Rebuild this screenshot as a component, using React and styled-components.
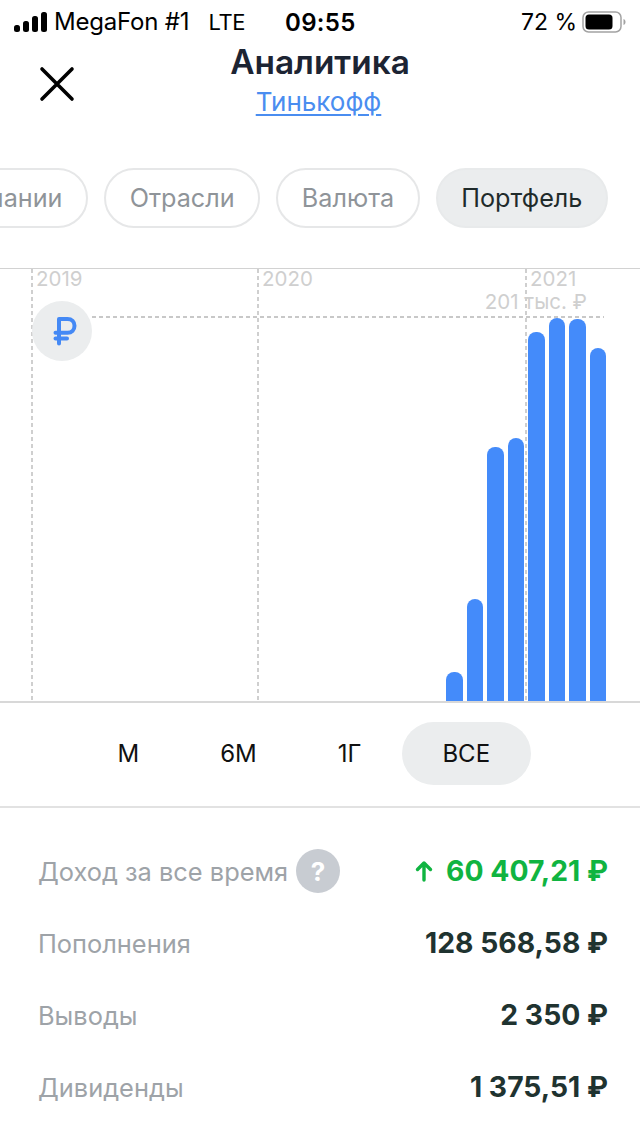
import * as React from "react";
import styled, { createGlobalStyle } from "styled-components";

const TABS = [
  { label: "Компании" },
  { label: "Отрасли" },
  { label: "Валюта" },
  { label: "Портфель", active: true },
];
const PERIODS = [
  { label: "М" },
  { label: "6М" },
  { label: "1Г" },
  { label: "ВСЕ", active: true },
];
const YEARS = [
  { label: "2019", x: 31 },
  { label: "2020", x: 257 },
  { label: "2021", x: 525 },
];
const BARS = [29, 102, 254, 263, 369, 383, 382, 353];
const STATS = [
  { label: "Пополнения", value: "128 568,58 ₽" },
  { label: "Выводы", value: "2 350 ₽" },
  { label: "Дивиденды", value: "1 375,51 ₽" },
];

const App = () => {
  return (
    <Page>
      <GlobalStyle />
      <StatusBar>
        <StatusLeft>
          <svg width="33" height="20" viewBox="0 0 33 20">
            <rect x="0" y="13" width="6" height="7" rx="2.5" fill="#000" />
            <rect x="9" y="9" width="6" height="11" rx="2.5" fill="#000" />
            <rect x="18" y="4" width="6" height="16" rx="2.5" fill="#000" />
            <rect x="27" y="0" width="6" height="20" rx="2.5" fill="#000" />
          </svg>
          <Carrier>MegaFon #1</Carrier>
          <Network>LTE</Network>
        </StatusLeft>
        <Clock>09:55</Clock>
        <StatusRight>
          <BatteryLevel>72 %</BatteryLevel>
          <svg width="44" height="24" viewBox="0 0 44 24">
            <rect x="1" y="2" width="38" height="20" rx="5.5" fill="none" stroke="#a3a3a3" strokeWidth="1.5" />
            <rect x="3.5" y="4.5" width="27" height="15" rx="3.5" fill="#000" />
            <path d="M41.5 9 C43 9.6 43.5 10.6 43.5 12 C43.5 13.4 43 14.4 41.5 15 Z" fill="#a3a3a3" />
          </svg>
        </StatusRight>
      </StatusBar>

      <Header>
        <CloseButton>
          <svg width="36" height="36" viewBox="0 0 36 36">
            <path d="M3 3 L33 33 M33 3 L3 33" stroke="#000" strokeWidth="3.6" strokeLinecap="round" fill="none" />
          </svg>
        </CloseButton>
        <Titles>
          <Title>Аналитика</Title>
          <BrokerLink href="#">Тинькофф</BrokerLink>
        </Titles>
      </Header>

      <Tabs>
        {TABS.map((tab) => (
          <Tab key={tab.label} $active={tab.active}>{tab.label}</Tab>
        ))}
      </Tabs>

      <Chart>
        {YEARS.map((year) => (
          <YearMark key={year.label} style={{ left: year.x }}>
            <YearLabel>{year.label}</YearLabel>
          </YearMark>
        ))}
        <MaxLine />
        <MaxLabel>201 тыс. ₽</MaxLabel>
        <CurrencyBadge>
          <svg width="24" height="30" viewBox="0 0 24 30">
            <path
              d="M6 27.5 V3 H14.5 C18.8 3 21.5 5.8 21.5 9.8 C21.5 13.8 18.8 16.8 14.5 16.8 H2.5 M2.5 22.5 H14"
              stroke="#4489f5"
              strokeWidth="4"
              strokeLinecap="round"
              strokeLinejoin="round"
              fill="none"
            />
          </svg>
        </CurrencyBadge>
        <Bars>
          {BARS.map((height, i) => (
            <Bar key={i} style={{ height }} />
          ))}
        </Bars>
      </Chart>

      <Periods>
        {PERIODS.map((period) => (
          <Period key={period.label} $active={period.active}>{period.label}</Period>
        ))}
      </Periods>

      <Stats>
        <StatRow>
          <StatLabel>
            Доход за все время
            <HelpBadge>?</HelpBadge>
          </StatLabel>
          <StatValue $green>
            <svg width="18" height="22" viewBox="0 0 18 22">
              <path d="M9 20 V3 M2.5 9.5 L9 3 L15.5 9.5" stroke="#10b441" strokeWidth="3.4" fill="none" strokeLinecap="round" strokeLinejoin="round" />
            </svg>
            60 407,21 ₽
          </StatValue>
        </StatRow>
        {STATS.map((stat) => (
          <StatRow key={stat.label}>
            <StatLabel>{stat.label}</StatLabel>
            <StatValue>{stat.value}</StatValue>
          </StatRow>
        ))}
      </Stats>
    </Page>
  );
};

export default App;

const GlobalStyle = createGlobalStyle`
  html, body {
    margin: 0;
    padding: 0;
    background: #fff;
  }
  * {
    box-sizing: border-box;
  }
`;

const Page = styled.div`
  width: 640px;
  height: 1136px;
  overflow: hidden;
  background: #fff;
  font-family: "Inter", "Roboto", "Liberation Sans", sans-serif;
`;

const StatusBar = styled.div`
  display: grid;
  grid-template-columns: 285px auto 1fr;
  align-items: center;
  height: 44px;
  padding: 0 14px;
  color: #000;
  font-size: 24px;
`;

const StatusLeft = styled.div`
  display: flex;
  align-items: center;
  margin-top: -1px;
`;

const Carrier = styled.span`
  margin-left: 7px;
  letter-spacing: -0.2px;
`;

const Network = styled.span`
  margin-left: 19px;
  font-size: 22px;
  letter-spacing: -0.3px;
`;

const Clock = styled.span`
  font-weight: 600;
  letter-spacing: 0.3px;
  margin-left: -14px;
`;

const StatusRight = styled.div`
  display: flex;
  justify-content: flex-end;
  align-items: center;
  gap: 8px;
`;

const BatteryLevel = styled.span`
  font-size: 23px;
  margin-right: -3px;
`;

const Header = styled.div`
  display: grid;
  grid-template-columns: 1fr auto 1fr;
  height: 80px;
`;

const CloseButton = styled.div`
  padding: 22px 0 0 39px;
`;

const Titles = styled.div`
  display: flex;
  flex-direction: column;
  align-items: center;
`;

const Title = styled.div`
  margin-top: -2px;
  color: #1c2433;
  font-size: 33.4px;
  line-height: 40px;
  font-weight: 600;
`;

const BrokerLink = styled.a`
  margin: 2px 3px 0 0;
  color: #4a8df0;
  font-size: 26px;
  line-height: 36px;
  text-decoration: underline;
  text-underline-offset: 3px;
`;

const Tabs = styled.div`
  display: flex;
  justify-content: flex-end;
  gap: 16px;
  height: 60px;
  margin-top: 44px;
  padding-right: 32px;
  overflow: hidden;
`;

const Tab = styled.div`
  flex: none;
  display: flex;
  align-items: center;
  height: 60px;
  padding: 0 23.6px;
  border-radius: 30px;
  border: 2px solid ${(p) => (p.$active ? "#e8eaeb" : "#e6e7e8")};
  background: ${(p) => (p.$active ? "#ebedee" : "#fff")};
  color: ${(p) => (p.$active ? "#1f2b2b" : "#8f9499")};
  font-size: 25.2px;
`;

const Chart = styled.div`
  position: relative;
  display: flex;
  justify-content: flex-end;
  align-items: flex-end;
  height: 435px;
  margin-top: 40px;
  padding-right: 34px;
  border-top: 1px solid #d2d2d2;
  border-bottom: 2px solid #d8d8d8;
`;

const YearMark = styled.div`
  position: absolute;
  top: 0;
  bottom: 0;
  width: 2px;
  background: repeating-linear-gradient(to bottom, #cfcfcf 0 4px, transparent 4px 7px);
`;

const YearLabel = styled.span`
  position: absolute;
  left: 5px;
  top: 0;
  color: #cfcfcf;
  font-size: 20.5px;
  line-height: 19px;
`;

const MaxLine = styled.div`
  position: absolute;
  left: 92px;
  right: 36px;
  top: 47px;
  height: 2px;
  background: repeating-linear-gradient(to right, #c8c8c8 0 4px, transparent 4px 7px);
`;

const MaxLabel = styled.span`
  position: absolute;
  right: 53px;
  top: 22px;
  color: #cfcfcf;
  font-size: 20.5px;
  line-height: 22px;
`;

const CurrencyBadge = styled.div`
  position: absolute;
  left: 32px;
  top: 32px;
  display: flex;
  align-items: center;
  justify-content: center;
  width: 60px;
  height: 60px;
  padding-left: 6px;
  border-radius: 50%;
  background: #ebedee;
`;

const Bars = styled.div`
  position: relative;
  display: flex;
  align-items: flex-end;
  gap: 4px;
`;

const Bar = styled.div`
  width: 16.5px;
  background: #448bfa;
  border-radius: 8px 8px 0 0;
`;

const Periods = styled.div`
  display: flex;
  align-items: center;
  height: 105px;
  padding: 0 0 2px 77px;
  border-bottom: 2px solid #e2e2e2;
`;

const Period = styled.div`
  display: flex;
  align-items: center;
  height: 63px;
  padding: 0 40.5px;
  border-radius: 32px;
  background: ${(p) => (p.$active ? "#ebedee" : "transparent")};
  color: #111;
  font-size: 24px;
`;

const Stats = styled.div`
  display: flex;
  flex-direction: column;
  margin-top: 27px;
  padding: 0 32px 0 38px;
`;

const StatRow = styled.div`
  display: flex;
  justify-content: space-between;
  align-items: center;
  height: 72px;
`;

const StatLabel = styled.div`
  display: flex;
  align-items: center;
  color: #9ea3a8;
  font-size: 25.4px;
`;

const HelpBadge = styled.span`
  display: flex;
  align-items: center;
  justify-content: center;
  width: 44px;
  height: 44px;
  margin-left: 8px;
  border-radius: 50%;
  background: #c8ccd2;
  color: #fff;
  font-size: 26px;
  font-weight: 700;
`;

const StatValue = styled.div`
  display: flex;
  align-items: center;
  gap: 13px;
  color: ${(p) => (p.$green ? "#10b441" : "#1f3330")};
  font-size: 28.3px;
  font-weight: 700;
`;
